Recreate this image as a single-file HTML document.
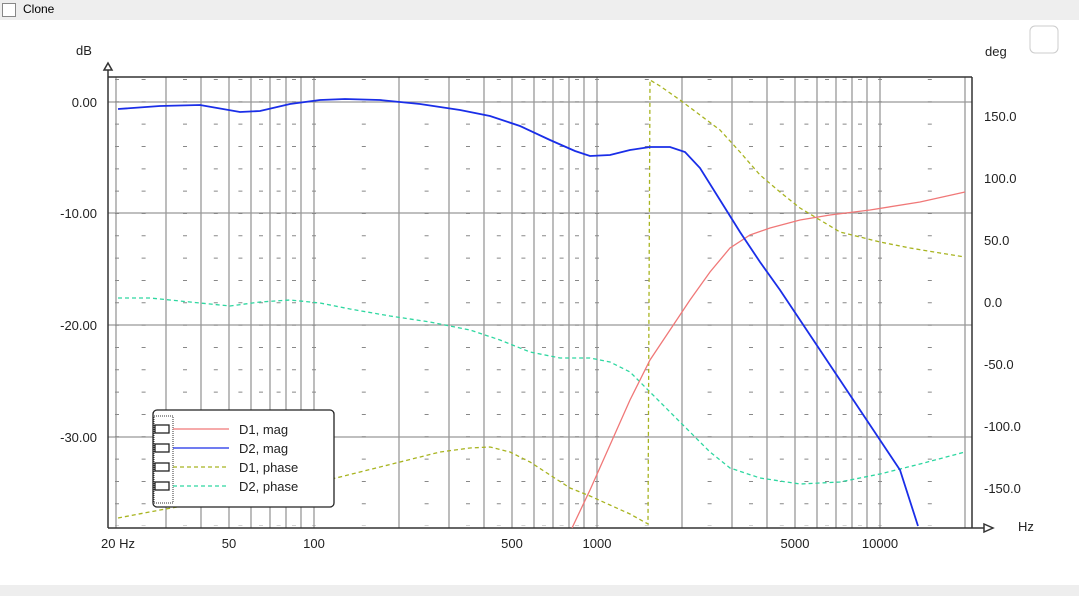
<!DOCTYPE html>
<html><head><meta charset="utf-8"><style>
body{margin:0;width:1079px;height:596px;overflow:hidden;background:#fff;font-family:"Liberation Sans",sans-serif;}
.top{position:absolute;left:0;top:0;width:1079px;height:20px;background:#eeeeee;}
.bot{position:absolute;left:0;top:585px;width:1079px;height:11px;background:#eeeeee;}
.cb{position:absolute;left:2px;top:3px;width:12px;height:12px;border:1px solid #888;background:#fff;}
.lbl{position:absolute;left:23px;top:2px;font-size:12px;color:#000;}
svg{position:absolute;left:0;top:0;}
</style></head><body>
<div class="top"></div><div class="cb"></div><div class="lbl">Clone</div>
<div class="bot"></div>
<svg width="1079" height="596" font-family="Liberation Sans, sans-serif" font-size="13">
<rect x="1030" y="26" width="28" height="27" rx="5" fill="#fff" stroke="#ccc"/>
<g stroke="#999" stroke-width="1.3">
<line x1="116" y1="77" x2="116" y2="528"/><line x1="166" y1="77" x2="166" y2="528"/><line x1="201" y1="77" x2="201" y2="528"/><line x1="229" y1="77" x2="229" y2="528"/><line x1="251" y1="77" x2="251" y2="528"/><line x1="270" y1="77" x2="270" y2="528"/><line x1="286" y1="77" x2="286" y2="528"/><line x1="301" y1="77" x2="301" y2="528"/><line x1="314" y1="77" x2="314" y2="528"/>
<line x1="399" y1="77" x2="399" y2="528"/><line x1="449" y1="77" x2="449" y2="528"/><line x1="484" y1="77" x2="484" y2="528"/><line x1="512" y1="77" x2="512" y2="528"/><line x1="534" y1="77" x2="534" y2="528"/><line x1="553" y1="77" x2="553" y2="528"/><line x1="569" y1="77" x2="569" y2="528"/><line x1="584" y1="77" x2="584" y2="528"/><line x1="597" y1="77" x2="597" y2="528"/>
<line x1="682" y1="77" x2="682" y2="528"/><line x1="732" y1="77" x2="732" y2="528"/><line x1="767" y1="77" x2="767" y2="528"/><line x1="795" y1="77" x2="795" y2="528"/><line x1="817" y1="77" x2="817" y2="528"/><line x1="836" y1="77" x2="836" y2="528"/><line x1="852" y1="77" x2="852" y2="528"/><line x1="867" y1="77" x2="867" y2="528"/><line x1="880" y1="77" x2="880" y2="528"/><line x1="965" y1="77" x2="965" y2="528"/>
<line x1="108" y1="102" x2="972" y2="102"/><line x1="108" y1="213" x2="972" y2="213"/><line x1="108" y1="325" x2="972" y2="325"/><line x1="108" y1="437" x2="972" y2="437"/>
</g>
<g stroke="#888" stroke-width="4" stroke-dasharray="1 21.33">
<line x1="117" y1="79" x2="117" y2="526"/><line x1="143.6" y1="79" x2="143.6" y2="526"/><line x1="185" y1="79" x2="185" y2="526"/><line x1="215.8" y1="79" x2="215.8" y2="526"/><line x1="240.4" y1="79" x2="240.4" y2="526"/><line x1="261" y1="79" x2="261" y2="526"/><line x1="278.6" y1="79" x2="278.6" y2="526"/><line x1="294" y1="79" x2="294" y2="526"/><line x1="314" y1="79" x2="314" y2="526"/>
<line x1="363.8" y1="79" x2="363.8" y2="526"/><line x1="426.6" y1="79" x2="426.6" y2="526"/><line x1="468" y1="79" x2="468" y2="526"/><line x1="498.8" y1="79" x2="498.8" y2="526"/><line x1="523.4" y1="79" x2="523.4" y2="526"/><line x1="544" y1="79" x2="544" y2="526"/><line x1="561.6" y1="79" x2="561.6" y2="526"/><line x1="577" y1="79" x2="577" y2="526"/><line x1="597" y1="79" x2="597" y2="526"/>
<line x1="646.8" y1="79" x2="646.8" y2="526"/><line x1="709.6" y1="79" x2="709.6" y2="526"/><line x1="751" y1="79" x2="751" y2="526"/><line x1="781.8" y1="79" x2="781.8" y2="526"/><line x1="806.4" y1="79" x2="806.4" y2="526"/><line x1="827" y1="79" x2="827" y2="526"/><line x1="844.6" y1="79" x2="844.6" y2="526"/><line x1="860" y1="79" x2="860" y2="526"/><line x1="880" y1="79" x2="880" y2="526"/><line x1="929.8" y1="79" x2="929.8" y2="526"/>
</g>
<g stroke="#333" stroke-width="1.5" fill="none">
<line x1="108" y1="77" x2="972" y2="77"/><line x1="108" y1="70" x2="108" y2="528"/><line x1="972" y1="77" x2="972" y2="528"/><line x1="108" y1="528" x2="990" y2="528"/>
<path d="M104,70 L108,63 L112,70 Z" fill="#fff"/><path d="M984,524 L993,528 L984,532 Z" fill="#fff"/>
</g>
<g fill="#222">
<text x="76" y="55">dB</text><text x="985" y="56">deg</text><text x="1018" y="531">Hz</text>
<g text-anchor="end"><text x="97" y="107">0.00</text><text x="97" y="218">-10.00</text><text x="97" y="330">-20.00</text><text x="97" y="442">-30.00</text></g>
<text x="984" y="121">150.0</text><text x="984" y="183">100.0</text><text x="984" y="245">50.0</text><text x="984" y="307">0.0</text><text x="984" y="369">-50.0</text><text x="984" y="431">-100.0</text><text x="984" y="493">-150.0</text>
<g text-anchor="middle"><text x="118" y="548">20 Hz</text><text x="229" y="548">50</text><text x="314" y="548">100</text><text x="512" y="548">500</text><text x="597" y="548">1000</text><text x="795" y="548">5000</text><text x="880" y="548">10000</text></g>
</g>
<g fill="none" stroke-width="1.3">
<polyline stroke="#2ed7a0" stroke-dasharray="4 3" points="118,298 150,298 190,302 230,306 260,302 290,300 320,303 350,309 390,316 430,322 470,330 500,340 530,352 560,358 590,358 610,362 630,372 650,392 670,412 690,432 710,452 730,468 760,478 800,484 840,482 880,474 920,464 965,452"/>
<polyline stroke="#a8b420" stroke-dasharray="4 3" points="118,518 160,510 200,503 240,497 280,490 320,482 360,472 400,462 440,452 470,448 490,447 510,452 530,462 550,475 570,488 590,496 610,505 630,514 648,524 650,80 660,86 680,100 700,115 720,130 740,152 760,175 780,192 800,208 820,220 840,232 860,237 880,242 910,248 940,253 965,257"/>
<polyline stroke="#f07878" points="572,528 590,490 610,445 630,400 650,360 670,330 690,300 710,272 730,248 750,235 770,228 800,220 830,215 870,210 920,202 965,192"/>
<polyline stroke="#1a2ee8" stroke-width="1.8" points="118,109 160,106 200,105 240,112 260,111 290,104 320,100 345,99 380,100 420,104 460,110 490,116 520,126 550,140 575,151 590,156 610,155 630,150 650,147 670,147 685,152 700,168 720,200 740,232 760,262 780,290 800,320 820,350 840,380 860,410 880,440 900,470 918,526"/>
</g>
<rect x="153" y="410" width="181" height="97" rx="4" fill="#fff" stroke="#222" stroke-width="1.3"/>
<rect x="154" y="416" width="19" height="87" fill="none" stroke="#333" stroke-dasharray="1 1"/>
<g fill="none" stroke="#222" stroke-width="1.3">
<rect x="155" y="425" width="14" height="8"/><rect x="155" y="444" width="14" height="8"/><rect x="155" y="463" width="14" height="8"/><rect x="155" y="482" width="14" height="8"/>
</g>
<g stroke-width="1.3">
<line x1="173" y1="429" x2="229" y2="429" stroke="#f07878"/><line x1="173" y1="448" x2="229" y2="448" stroke="#1a2ee8"/>
<line x1="173" y1="467" x2="229" y2="467" stroke="#a8b420" stroke-dasharray="4 3"/><line x1="173" y1="486" x2="229" y2="486" stroke="#2ed7a0" stroke-dasharray="4 3"/>
</g>
<g fill="#222"><text x="239" y="434">D1, mag</text><text x="239" y="453">D2, mag</text><text x="239" y="472">D1, phase</text><text x="239" y="491">D2, phase</text></g>
</svg>
</body></html>
